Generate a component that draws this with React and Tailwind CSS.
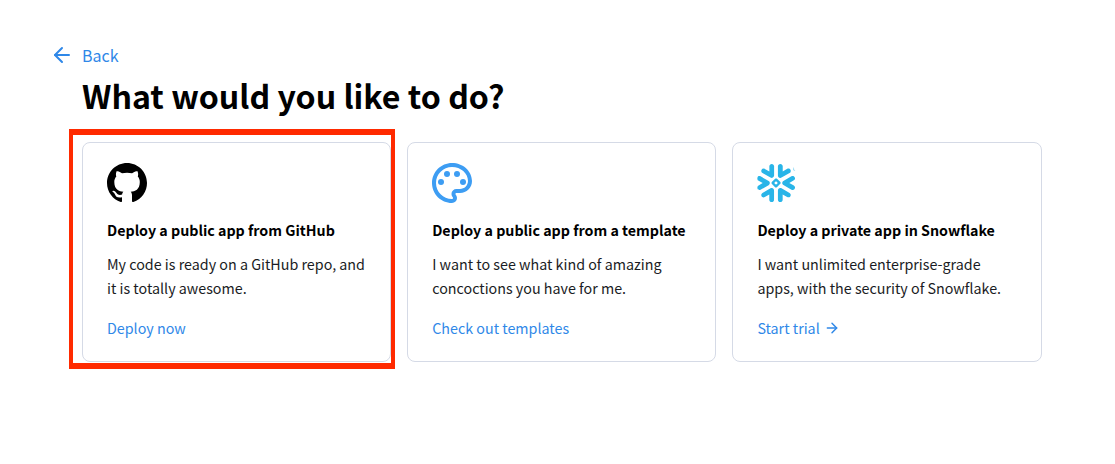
import React from 'react';
import { ArrowLeft, ArrowRight } from 'lucide-react';
import { BsGithub } from 'react-icons/bs';
import { MdOutlinePalette } from 'react-icons/md';
import { SiSnowflake } from 'react-icons/si';

const cards = [
  {
    title: 'Deploy a public app from GitHub',
    text: ['My code is ready on a GitHub repo, and', 'it is totally awesome.'],
    link: 'Deploy now',
    icon: <BsGithub className="shrink-0 text-[40px] text-black" />,
  },
  {
    title: 'Deploy a public app from a template',
    text: ['I want to see what kind of amazing', 'concoctions you have for me.'],
    link: 'Check out templates',
    icon: <MdOutlinePalette className="shrink-0 text-[48px] text-[#3d9df3]" />,
  },
  {
    title: 'Deploy a private app in Snowflake',
    text: ['I want unlimited enterprise-grade', 'apps, with the security of Snowflake.'],
    link: 'Start trial',
    arrow: true,
    // the package's logo carries a small registered mark in the corner, the reference has none
    icon: <SiSnowflake className="shrink-0 text-[40px] text-[#29b5e8] [clip-path:polygon(0_0,84%_0,100%_30%,100%_100%,0_100%)]" />,
  },
];

export default function App() {
  return (
    <div
      className="w-[1115px] h-[464px] bg-white pt-[43px] pl-[50px] overflow-hidden"
      style={{ fontFamily: '"Noto Sans CJK SC", "Noto Sans", sans-serif' }}
    >
      <a className="flex items-center h-[24px] text-[#2f88e8] text-[16px] leading-[24px]">
        <ArrowLeft className="w-[24px] h-[24px] mr-[8px]" strokeWidth={2} />
        Back
      </a>
      <div className="ml-[32px] w-[960px]">
        <h1 className="text-[32.15px] leading-[48px] font-bold text-black mt-[4px] mb-[23px]">What would you like to do?</h1>
        <div className="relative grid grid-cols-[309.2px_309.2px_309.6px] gap-[16px]">
          {cards.map((card) => (
            <div key={card.title} className="h-[220px] rounded-[8px] border border-[#d5dae6] bg-white pt-[20px] px-[24px]">
              <div className="flex items-center justify-center h-[40px] w-[40px]">{card.icon}</div>
              <h2 className="mt-[15px] text-[14.25px] leading-[24px] font-bold text-black">{card.title}</h2>
              <p className="mt-[10px] text-[14.3px] leading-[24px] text-[#1a1c24]">
                {card.text[0]}
                <br />
                {card.text[1]}
              </p>
              <a className="mt-[16px] flex items-center text-[14.3px] leading-[24px] text-[#2f88e8]">
                {card.link}
                {card.arrow && <ArrowRight className="w-[16px] h-[16px] ml-[4px]" strokeWidth={2.2} />}
              </a>
            </div>
          ))}
          <div className="absolute left-[-13px] top-[-13px] w-[326px] h-[240px] border-x-[4px] border-y-[6px] border-[#ff2a00] pointer-events-none" />
        </div>
      </div>
    </div>
  );
}
